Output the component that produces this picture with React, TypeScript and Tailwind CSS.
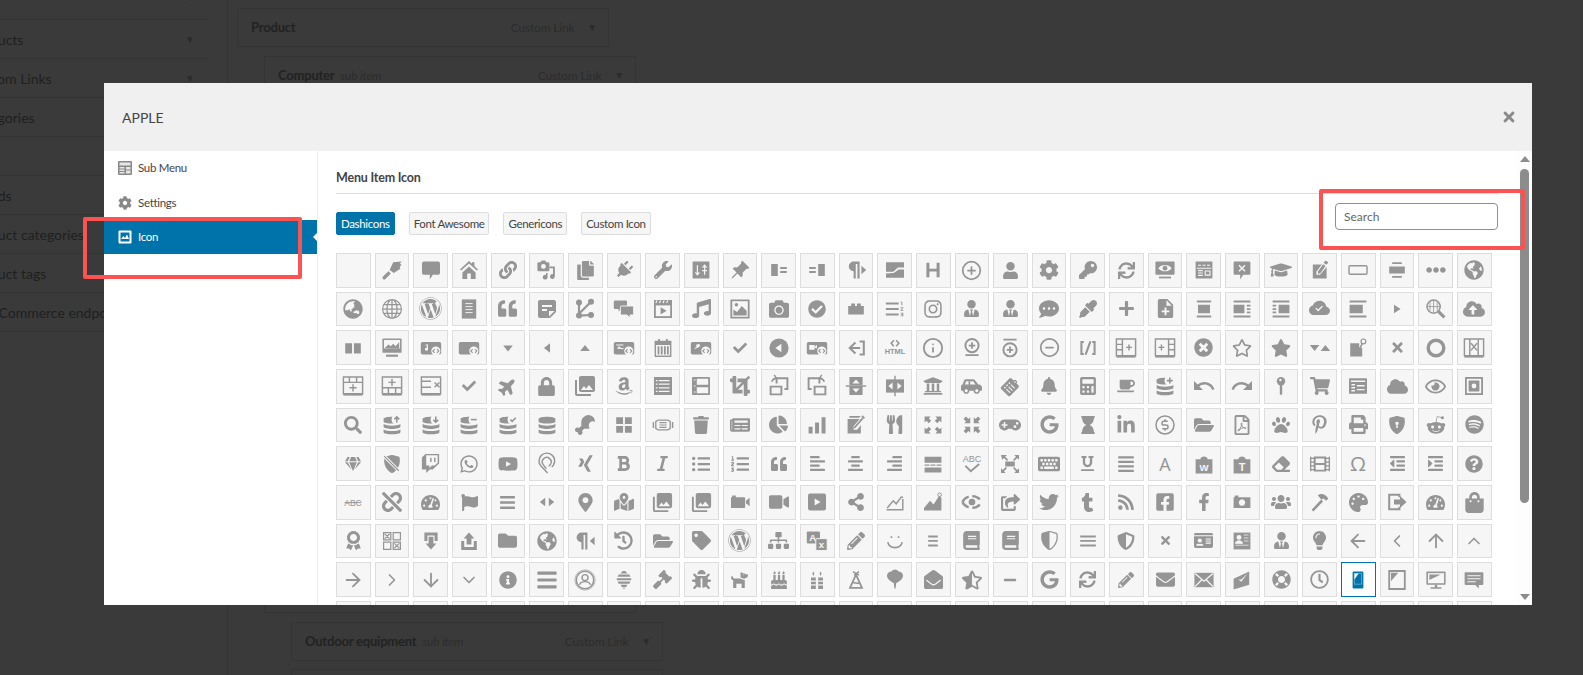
import type { ReactNode } from "react";
import {
  FaPlug, FaWrench, FaHeading, FaUser, FaCog, FaKey, FaSync, FaLink, FaCopy,
  FaGraduationCap, FaEllipsisH, FaGlobeAmericas, FaGlobeAsia, FaWordpress, FaQuoteLeft,
  FaMusic, FaCamera, FaCheckCircle, FaInstagram, FaUserTie, FaCommentDots, FaEyeDropper, FaPlus, FaCloudUploadAlt,
  FaTimesCircle, FaRegStar, FaStar, FaTimes, FaCheck, FaPlane, FaLock, FaAmazon, FaCrop, FaUniversity, FaCarSide,
  FaClipboardList, FaBell, FaCalculator, FaCoffee, FaShoppingCart, FaCloud, FaRegEye, FaSearch, FaDrumstickBite,
  FaTrash, FaNewspaper, FaChartPie, FaUtensils, FaGamepad, FaGoogle, FaHourglass, FaLinkedinIn, FaFolderOpen,
  FaRegFilePdf, FaPaw, FaPinterestP, FaPrint, FaRedditAlien, FaSpotify, FaGem, FaTwitch, FaWhatsapp, FaYoutube,
  FaXing, FaBold, FaItalic, FaListUl, FaListOl, FaAlignLeft, FaAlignCenter, FaAlignRight, FaAlignJustify,
  FaKeyboard, FaUnderline, FaEraser, FaFilm, FaOutdent, FaIndent, FaQuestionCircle, FaUnlink, FaTachometerAlt,
  FaFlag, FaBars, FaMapMarkedAlt, FaVideo, FaShareAlt, FaShareSquare, FaTwitter, FaTumblr, FaRss, FaFacebookSquare,
  FaFacebookF, FaUsers, FaPalette, FaShoppingBag, FaAward, FaFolder, FaHistory, FaTag, FaSitemap,
  FaPencilAlt, FaBook, FaShieldAlt, FaIdCard, FaLightbulb, FaInfoCircle, FaGavel, FaBug, FaDog, FaBirthdayCake,
  FaEnvelopeOpen, FaStarHalfAlt, FaMinus, FaEnvelope, FaLifeRing, FaRegClock,
  FaMapMarkerAlt,
} from "react-icons/fa";
import {
  FiPlusCircle, FiMinusCircle, FiInfo, FiArrowLeft, FiArrowRight, FiArrowUp, FiArrowDown, FiChevronLeft,
  FiChevronRight, FiChevronUp, FiChevronDown,
} from "react-icons/fi";
import { BsGlobe, BsPinAngleFill, BsCloudCheckFill, BsShieldLockFill, BsShieldSlashFill, BsShieldShaded } from "react-icons/bs";
import { MdStickyNote2, MdFormatListNumberedRtl, MdNoteAdd, MdPhotoLibrary, MdUndo, MdRedo } from "react-icons/md";
import { PiCurrencyCircleDollar } from "react-icons/pi";

const B = "#f6f6f6";
const SANS = "Liberation Sans, sans-serif";

// dashicons are a 20 unit grid drawn at 24px
function S({ children }: { children: ReactNode }) {
  return (
    <svg viewBox="0 0 20 20" width="24" height="24" fill="currentColor">
      {children}
    </svg>
  );
}
const F = ({ d }: { d: string }) => (
  <S>
    <path d={d} />
  </S>
);
const L = ({ d, w = 1.6 }: { d: string; w?: number }) => (
  <S>
    <path d={d} fill="none" stroke="currentColor" strokeWidth={w} />
  </S>
);
const Cut = ({ d, w = 1 }: { d: string; w?: number }) => <path d={d} fill="none" stroke={B} strokeWidth={w} />;

const Db = ({ sign }: { sign?: string }) => (
  <S>
    <path d="M3 5c0-2.600 14-2.600 14 0v2c0 2.400-14 2.400-14 0zM3 9.200c3 1.800 11 1.800 14 0v2.300c0 2.400-14 2.400-14 0zM3 13.700c3 1.800 11 1.800 14 0V16c0 2.400-14 2.400-14 0z" />
    {sign && <circle cx="14" cy="5.500" r="4.400" fill={B} />}
    {sign && <path d={sign} fill="none" stroke="currentColor" strokeWidth="1.300" />}
  </S>
);

const BlockCode = ({ children }: { children?: ReactNode }) => (
  <S>
    <rect x="1.500" y="5" width="17" height="10.500" rx="1.500" />
    {children}
    <circle cx="14" cy="12.500" r="3.800" fill={B} />
    <path d="M13 11l-1.500 1.500L13 14M15 11l1.500 1.500L15 14" fill="none" stroke="currentColor" strokeWidth=".9" />
  </S>
);

const Tbl = ({ d }: { d: string }) => (
  <S>
    <path d={"M2 2.500h16v14H2z" + d} fill="none" stroke="currentColor" strokeWidth="1.200" />
    <path d="M2 16h16v2H2z" />
  </S>
);

const Phone = (
  <S>
    <rect x="5.500" y="3" width="9" height="14" rx="1" />
    <path d="M7 4.500h3.500L7 9.500z" fill="#fff" />
    <path d="M7 4.500h6v9H7z" fill="none" stroke="#fff" strokeWidth=".3" />
  </S>
);

const row1 = [
  null,
  <F d="M2.500 15.500 7 11l2 2-4.500 4.500a1.400 1.400 0 0 1-2-2zM8 10l3-6.500 7-.5-1.500 2 1.500.5-1.500 2 .5 1.500-5.500 3.500z" />,
  <F d="M4 3h12a1.500 1.500 0 0 1 1.500 1.500v8a1.500 1.500 0 0 1-1.500 1.500h-4.500l-2.500 4v-4H4a1.500 1.500 0 0 1-1.500-1.500v-8A1.500 1.500 0 0 1 4 3z" />,
  <F d="M10 2.500 2.500 9.500l1 1L10 4.500l6.500 6 1-1-3-2.800V3.500h-2v1.300zM4.500 12 10 7l5.500 5v5.500h-4v-4.500h-3v4.500h-4z" />,
  <FaLink size={18} />,
  <S>
    <path d="M3 3.500h1.500l1-1.500h3l1 1.500H11a1 1 0 0 1 1 1V10a1 1 0 0 1-1 1H3a1 1 0 0 1-1-1V4.500a1 1 0 0 1 1-1z" />
    <circle cx="7" cy="7" r="2" fill={B} />
    <path d="M16.500 7v8.500a2 2 0 1 1-1.500-2V8.500h-3V7zM10.500 12.500v3.500a2 2 0 1 1-1.300-1.900v-1.600z" />
  </S>,
  <FaCopy size={19} />,
  <div className="rotate-45">
    <FaPlug size={18} />
  </div>,
  <FaWrench size={18} />,
  <S>
    <rect x="3" y="3" width="14" height="14" rx=".6" />
    <Cut d="M7 6v8M5.300 12 7 14l1.700-2M13 14V6M11.300 8 13 6l1.700 2M11 10.500h4" />
  </S>,
  <BsPinAngleFill size={20} />,
  <F d="M3.500 5h5.500v10H3.500zM11 7.500h5.500v1.700H11zM11 10.800h5.500v1.700H11z" />,
  <F d="M11 5h5.500v10H11zM3.500 7.500H9v1.700H3.500zM3.500 10.800H9v1.700H3.500z" />,
  <F d="M8 3a4 4 0 0 0 0 8v6h1.800V5h1.400v12H13V3zM14.500 6.500l4 3.500-4 3.500z" />,
  <F d="M2.500 3.500h15v4.500h-5l-4 3.500h-6zM17.500 9.500v7h-15V13l6.500-.5 4-3z" />,
  <F d="M4.500 4h2.500v5h6V4h2.500v12H13v-4.800H7V16H4.500z" />,
  <FiPlusCircle size={21} />,
  <FaUser size={17} />,
  <FaCog size={20} />,
  <FaKey size={18} />,
  <FaSync size={17} />,
  <S>
    <rect x="2" y="3" width="16" height="11" rx=".8" />
    <path d="M4.500 8.500C7 5 13 5 15.500 8.500 13 12 7 12 4.500 8.500z" fill={B} />
    <circle cx="10" cy="8.500" r="2" />
    <path d="M5 15.500h10V17H5z" />
  </S>,
  <S>
    <rect x="3" y="3" width="14" height="14" rx=".6" />
    <Cut d="M5 6h2.500M8.800 6h2.500M12.500 6H15M4 8.500h12M5 10.500h4M5 12.500h4M5 14.500h4M11 10.800h4v3.500h-4z" w={0.9} />
  </S>,
  <S>
    <path d="M4 3h12a1 1 0 0 1 1 1v9a1 1 0 0 1-1 1h-5l-2.500 4v-4H4a1 1 0 0 1-1-1V4a1 1 0 0 1 1-1z" />
    <Cut d="M7.500 6l5 5M12.500 6l-5 5" w={1.200} />
  </S>,
  <FaGraduationCap size={22} />,
  <F d="M4 5.500h7.500L7 11.500V14h3l5.500-6.500V17H4zM13 4l1.700-2 2.300 1.700-1.700 2zM8.300 11.300l4.300-6 2 1.400-4.300 6-2 .5z" />,
  <L d="M3.500 6.500h13a1 1 0 0 1 1 1v5a1 1 0 0 1-1 1h-13a1 1 0 0 1-1-1v-5a1 1 0 0 1 1-1z" w={1.200} />,
  <F d="M6 3.500h8V5H6zM3.500 7h13v6h-13zM6 15h8v1.500H6z" />,
  <FaEllipsisH size={20} />,
  <FaGlobeAmericas size={20} />,
];

const row2 = [
  <FaGlobeAsia size={20} />,
  <BsGlobe size={20} />,
  <FaWordpress size={23} />,
  <S>
    <rect x="4" y="2" width="12" height="16" />
    <Cut d="M7 5.500h6M7 8h6M7 10.500h6M7 13h6" w={0.8} />
  </S>,
  <FaQuoteLeft size={19} />,
  <MdStickyNote2 size={24} />,
  <S>
    <circle cx="5" cy="4.500" r="2.500" />
    <circle cx="15" cy="4" r="2.500" />
    <circle cx="5" cy="15.500" r="2.500" />
    <circle cx="15" cy="15" r="2.500" />
    <path d="M5 4.500v11M15 4 5 14M5 15.500 15 15" fill="none" stroke="currentColor" strokeWidth="1.800" />
  </S>,
  <S>
    <path d="M2.500 3h9a1 1 0 0 1 1 1v5a1 1 0 0 1-1 1H7.500l-2 2v-2h-3a1 1 0 0 1-1-1V4a1 1 0 0 1 1-1z" />
    <path d="M8 7.500h9a1 1 0 0 1 1 1v5.500a1 1 0 0 1-1 1h-2v2.500L12.500 15H8a1 1 0 0 1-1-1V8.500a1 1 0 0 1 1-1z" stroke={B} strokeWidth=".8" />
  </S>,
  <S>
    <rect x="2.500" y="2.500" width="15" height="15" />
    <path d="M4 7h12v9H4z" fill={B} />
    <path d="M8 8.500v6l5-3z" />
    <Cut d="M4 5l1-2M7 5l1-2M10 5l1-2M13 5l1-2" />
  </S>,
  <FaMusic size={19} />,
  <S>
    <rect x="2" y="2" width="16" height="16" rx=".5" />
    <path d="M3.500 3.500h13v13h-13z" fill={B} />
    <path d="M4.500 15.500v-5l3 2 4-5 4 4v4z" />
    <circle cx="7" cy="6.500" r="1.500" />
  </S>,
  <FaCamera size={20} />,
  <FaCheckCircle size={18} />,
  <F d="M3.500 7.500h2.500V5.500h3.200v2h1.600v-2h3.200v2h2.500v7h-13z" />,
  <MdFormatListNumberedRtl size={22} />,
  <FaInstagram size={20} />,
  <FaUserTie size={17} />,
  <FaUserTie size={17} />,
  <FaCommentDots size={20} />,
  <FaEyeDropper size={18} />,
  <FaPlus size={17} />,
  <MdNoteAdd size={23} />,
  <F d="M4 3h12v1.500H4zM5 6.500h10v7H5zM4 15.500h12V17H4z" />,
  <F d="M3 3h14v1.500H3zM3 6.500h9v7H3zM14 6.500h3V8h-3zM14 9.300h3v1.500h-3zM14 12h3v1.500h-3zM3 15.500h14V17H3z" />,
  <F d="M3 3h14v1.500H3zM8 6.500h9v7H8zM3 6.500h3V8H3zM3 9.300h3v1.500H3zM3 12h3v1.500H3zM3 15.500h14V17H3z" />,
  <BsCloudCheckFill size={21} />,
  <F d="M3 3h14v1.500H3zM3 6.500h11v7H3zM3 15.500h14V17H3z" />,
  <F d="M7.500 6.500l5.500 3.500-5.500 3.500z" />,
  <S>
    <circle cx="8" cy="8" r="5.500" fill="none" stroke="currentColor" strokeWidth="1.300" />
    <path d="M12 12l5 5" stroke="currentColor" strokeWidth="2.500" />
    <path d="M3 8h10M8 3v10M5 4.500v7M11 4.500v7" fill="none" stroke="currentColor" strokeWidth=".7" />
  </S>,
  <FaCloudUploadAlt size={22} />,
];

const row3 = [
  <F d="M3.500 6h5.700v8.500H3.500zM10.800 6h5.700v8.500h-5.700z" />,
  <S>
    <rect x="2" y="2" width="16" height="12" rx=".6" />
    <path d="M3.300 3.300h13.400v7H3.300z" fill={B} />
    <path d="M4 10l3-3 2 1.500 2-2 2 2 3-3.500v5.500z" />
    <path d="M5 15.500h10V17.300H5z" />
  </S>,
  <BlockCode>
    <path d="M7.500 7v4a1.300 1.300 0 1 1-1-1.200V8h-1V7z" fill={B} />
  </BlockCode>,
  <BlockCode />,
  <F d="M6 8h8l-4 5z" />,
  <F d="M12.500 6v8l-5-4z" />,
  <F d="M6 12.500h8l-4-5z" />,
  <BlockCode>
    <path d="M3.500 7h6v1H3.500zM4 10.500l2-2 1.500 1.500h2v1z" fill={B} />
  </BlockCode>,
  <S>
    <path d="M3 4h3V2.500h1.500V4h5V2.500H14V4h3v13.500H3z" />
    <path d="M4.200 7.500h11.600v8.800H4.200z" fill={B} />
    <path d="M5.500 8.500h1.500v7H5.500zM8.200 8.500h1.500v7H8.200zM10.800 8.500h1.500v7h-1.500zM13.300 8.500h1.500v7h-1.500z" />
  </S>,
  <BlockCode>
    <path d="M4 11l2.500-2.500L5.500 7.500l3-1 1 2-1 .2-1 1-1 .3z" fill={B} />
  </BlockCode>,
  <FaCheck size={14} />,
  <S>
    <circle cx="10" cy="10" r="8" />
    <path d="M12 6.500v7L7 10z" fill={B} />
  </S>,
  <BlockCode>
    <path d="M3.500 7.500h4.500v4H3.500zM8 9l2-1.500v3L8 9.500z" fill={B} />
  </BlockCode>,
  <L d="M9.500 5.500 4.800 10l4.700 4.500M5 10h8.500M13 4.500h3.500v11H13" w={1.700} />,
  <S>
    <path d="M9 3.500 6.800 6 9 8.500M11 3.500 13.200 6 11 8.500" fill="none" stroke="currentColor" strokeWidth="1.300" />
    <text x="10" y="15" fontSize="6.200" fontWeight="700" textAnchor="middle" fontFamily={SANS}>
      HTML
    </text>
  </S>,
  <FiInfo size={22} />,
  <S>
    <circle cx="10" cy="8" r="5.500" fill="none" stroke="currentColor" strokeWidth="1.600" />
    <path d="M10 5.300v5.400M7.300 8h5.400M4.500 16h11" fill="none" stroke="currentColor" strokeWidth="1.500" />
  </S>,
  <S>
    <circle cx="10" cy="11.500" r="5.500" fill="none" stroke="currentColor" strokeWidth="1.600" />
    <path d="M10 8.800v5.400M7.300 11.500h5.400M4.500 3h11" fill="none" stroke="currentColor" strokeWidth="1.500" />
  </S>,
  <FiMinusCircle size={21} />,
  <L d="M6.500 5H4.500v10h2M13.500 5h2v10h-2M12 4.500 8 15.500" w={1.700} />,
  <Tbl d="M7 2.500v14M2 7h5M2 11.500h5M12.500 7v5M10 9.500h5" />,
  <Tbl d="M13 2.500v14M13 7h5M13 11.500h5M7 7v5M4.500 9.500h5" />,
  <FaTimesCircle size={19} />,
  <FaRegStar size={20} />,
  <FaStar size={20} />,
  <F d="M1.500 7.500h8l-4 5zM18.500 12.500h-8l4-5z" />,
  <S>
    <path d="M3.500 6h7.500v3.300l2.500 1V17h-10z" />
    <circle cx="14.500" cy="4.500" r="2" fill="none" stroke="currentColor" strokeWidth="1" />
    <path d="M13.500 6l-2 5" stroke="currentColor" strokeWidth="1.300" />
  </S>,
  <FaTimes size={15} />,
  <S>
    <circle cx="10" cy="10" r="6.500" fill="none" stroke="currentColor" strokeWidth="2.800" />
  </S>,
  <Tbl d="M6.500 2.500v14M13.500 2.500v14M7.500 6l5 6M12.500 6l-5 6" />,
];

const row4 = [
  <Tbl d="M2 7h16M7 2.500v4.500M13 2.500v4.500M10 8.500v6M7 11.500h6" />,
  <Tbl d="M2 11.500h16M7 11.500v5M13 11.500v5M10 4v6M7 7h6" />,
  <Tbl d="M2 6h8M2 11h8M13 7l4 4M17 7l-4 4" />,
  <FaCheck size={14} />,
  <div className="-rotate-45">
    <FaPlane size={19} />
  </div>,
  <FaLock size={19} />,
  <MdPhotoLibrary size={24} />,
  <FaAmazon size={20} />,
  <S>
    <rect x="2.500" y="2.500" width="15" height="15" />
    <Cut d="M6.500 5.500h9M4 5.500h1.500M6.500 8.500h9M4 8.500h1.500M6.500 11.500h9M4 11.500h1.500M6.500 14.500h9M4 14.500h1.500" w={1} />
  </S>,
  <S>
    <rect x="2.500" y="2.500" width="15" height="15" rx=".6" />
    <path d="M6.500 4h9.500v5H6.500zM6.500 11h9.500v5H6.500z" fill={B} />
    <path d="M4 4.500h1.500v1H4zM4 9.500h1.500v1H4zM4 14.500h1.500v1H4z" fill={B} />
  </S>,
  <FaCrop size={20} />,
  <S>
    <path d="M3 10.500h9v6.500H3zM8 8V3.500h9v9h-2.500" fill="none" stroke="currentColor" strokeWidth="1.600" />
    <path d="M4 6.500a4 4 0 0 1 3-3M6 .8l1.800 2.700L4.600 5" fill="none" stroke="currentColor" strokeWidth="1.200" />
  </S>,
  <S>
    <path d="M8 10.500h9v6.500H8zM12 8V3.500H3v9h2.500" fill="none" stroke="currentColor" strokeWidth="1.600" />
    <path d="M16 6.500a4 4 0 0 0-3-3M14 .8l-1.800 2.700L15.400 5" fill="none" stroke="currentColor" strokeWidth="1.200" />
  </S>,
  <S>
    <path d="M4.500 2.500h11v15h-11z" />
    <path d="M7 8l3-3.500L13 8zM7 12l3 3.500 3-3.500z" fill={B} />
    <path d="M1.500 10h17" stroke="currentColor" strokeWidth="1.200" />
    <path d="M4 9.500h12v.2H4z" fill={B} />
  </S>,
  <S>
    <path d="M2.500 4.500h15v11h-15z" />
    <path d="M8 7l-3.500 3L8 13zM12 7l3.500 3-3.500 3z" fill={B} />
    <path d="M10 1.500v17" stroke="currentColor" strokeWidth="1.200" />
  </S>,
  <FaUniversity size={20} />,
  <FaCarSide size={21} />,
  <div className="rotate-45">
    <FaClipboardList size={17} />
  </div>,
  <FaBell size={18} />,
  <FaCalculator size={18} />,
  <FaCoffee size={18} />,
  <Db sign="M14 3v5M11.500 5.500h5" />,
  <MdUndo size={24} />,
  <MdRedo size={24} />,
  <S>
    <circle cx="10" cy="6" r="3.500" />
    <path d="M9 8h2v8.500l-1 1.500-1-1.500z" />
    <circle cx="9.500" cy="5" r="1" fill={B} />
  </S>,
  <FaShoppingCart size={20} />,
  <S>
    <rect x="2.500" y="3.500" width="15" height="13" rx=".4" />
    <Cut d="M4 6h12M4.500 9h3M4.500 11.500h3M4.500 14h3M9 9.800h6.500M9 13h6.500" w={1.200} />
  </S>,
  <FaCloud size={21} />,
  <FaRegEye size={21} />,
  <S>
    <rect x="2.500" y="2.500" width="15" height="15" rx=".5" />
    <path d="M4 4h12v12H4z" fill={B} />
    <rect x="5.500" y="5.500" width="9" height="9" rx=".5" />
    <circle cx="10" cy="10" r="2" fill={B} />
  </S>,
];

const row5 = [
  <FaSearch size={18} />,
  <Db sign="M14 8V3.300M12 5.300l2-2 2 2" />,
  <Db sign="M14 3v4.700M12 5.700l2 2 2-2" />,
  <Db sign="M11.500 5.500h5" />,
  <Db sign="M12 5.500l1.500 1.500 3-3" />,
  <Db />,
  <FaDrumstickBite size={20} />,
  <F d="M3.500 3.500h5.700v5.700H3.500zM10.800 3.500h5.700v5.700h-5.700zM3.500 10.800h5.700v5.700H3.500zM10.800 10.800h5.700v5.700h-5.700z" />,
  <S>
    <path d="M2 7.500v5M18 7.500v5" stroke="currentColor" strokeWidth="1.200" />
    <path d="M4 7l2-1h8l2 1v6l-2 1H6l-2-1z" fill="none" stroke="currentColor" strokeWidth="1.100" />
    <path d="M7 8h6M7 10h6M7 12h6" stroke="currentColor" strokeWidth=".9" />
  </S>,
  <FaTrash size={18} />,
  <FaNewspaper size={20} />,
  <FaChartPie size={19} />,
  <F d="M3 11.500h3.300V17H3zM8.400 8h3.300v9H8.400zM13.800 3.500h3.300V17h-3.300z" />,
  <S>
    <path d="M3 5h10l-5 6v3h3l3-4v7H3z" />
    <path d="M4.500 4V2.500h9.500l-1.500 1.500z" />
    <path d="M8.500 12.500l7-8M15 2.500l2 2" fill="none" stroke="currentColor" strokeWidth="1.500" />
  </S>,
  <FaUtensils size={19} />,
  <F d="M3 3h5L6.500 4.500 8.500 6.500 6.500 8.500 4.500 6.500 3 8zM17 3v5l-1.500-1.500-2 2-2-2 2-2L12 3zM3 17v-5l1.500 1.500 2-2 2 2-2 2L8 17zM17 17h-5l1.500-1.500-2-2 2-2 2 2L17 12z" />,
  <F d="M8.500 8.500h-5L5 7 3 5l2-2 2 2 1.500-1.500zM11.500 8.500V3.500L13 5l2-2 2 2-2 2 1.500 1.500zM8.500 11.500v5L7 15l-2 2-2-2 2-2-1.500-1.500zM11.500 11.500h5L15 13l2 2-2 2-2-2-1.500 1.500z" />,
  <FaGamepad size={22} />,
  <FaGoogle size={19} />,
  <FaHourglass size={18} />,
  <FaLinkedinIn size={20} />,
  <PiCurrencyCircleDollar size={24} />,
  <FaFolderOpen size={20} />,
  <FaRegFilePdf size={20} />,
  <FaPaw size={18} />,
  <FaPinterestP size={19} />,
  <FaPrint size={19} />,
  <BsShieldLockFill size={18} />,
  <FaRedditAlien size={20} />,
  <FaSpotify size={19} />,
];

const row6 = [
  <FaGem size={16} />,
  <BsShieldSlashFill size={18} />,
  <FaTwitch size={19} />,
  <FaWhatsapp size={20} />,
  <FaYoutube size={20} />,
  <L d="M10.500 17.500 4.800 11.500a6.500 6.500 0 1 1 10.500-.5L14 12.500M9.500 14l-2.700-3.500a3.700 3.700 0 1 1 6.200-.4L11.500 12" w={1.200} />,
  <FaXing size={19} />,
  <FaBold size={17} />,
  <FaItalic size={17} />,
  <FaListUl size={18} />,
  <FaListOl size={18} />,
  <FaQuoteLeft size={16} />,
  <FaAlignLeft size={17} />,
  <FaAlignCenter size={17} />,
  <FaAlignRight size={17} />,
  <F d="M3 4h14v5H3zM3 10.500h4v1h-4zM8 10.500h4v1H8zM13 10.500h4v1h-4zM3 13h14v4H3z" />,
  <S>
    <text x="10" y="8.500" fontSize="7.500" textAnchor="middle" fontFamily={SANS}>
      ABC
    </text>
    <path d="M4.500 11.500 9 16l7-6" fill="none" stroke="currentColor" strokeWidth="1.500" />
  </S>,
  <S>
    <path d="M6 8h8v4H6zM2.500 2.500h5L6 4l2.500 2.500-1 1L5 5 3.500 6.500zM17.500 2.500v4L16 5l-2.500 2.500-1-1L15 4l-1.500-1.500zM2.500 17.500v-4L4 15l2.500-2.500 1 1L5 16l1.500 1.500zM17.500 17.500h-4L15 16l-2.500-2.500 1-1L16 15l1.500-1.500z" />
  </S>,
  <FaKeyboard size={22} />,
  <FaUnderline size={15} />,
  <FaAlignJustify size={18} />,
  <S>
    <text x="10" y="15.500" fontSize="15" textAnchor="middle" fontFamily="Open Sans, sans-serif">
      A
    </text>
  </S>,
  <S>
    <path d="M3 6h4c0-3 6-3 6 0h4v12H3z" />
    <text x="10" y="16" fontSize="8" fontWeight="700" textAnchor="middle" fill={B} fontFamily={SANS}>
      W
    </text>
  </S>,
  <S>
    <path d="M3 6h4c0-3 6-3 6 0h4v12H3z" />
    <text x="10" y="16" fontSize="9" fontWeight="700" textAnchor="middle" fill={B} fontFamily={SANS}>
      T
    </text>
  </S>,
  <FaEraser size={18} />,
  <FaFilm size={20} />,
  <S>
    <text x="10" y="16" fontSize="17" textAnchor="middle" fontFamily="Open Sans, sans-serif">
      Ω
    </text>
  </S>,
  <FaOutdent size={17} />,
  <FaIndent size={17} />,
  <FaQuestionCircle size={18} />,
];

const row7 = [
  <S>
    <text x="10" y="13" fontSize="7" textAnchor="middle" fontFamily={SANS}>
      ABC
    </text>
    <path d="M3 10.500h14" stroke="currentColor" strokeWidth=".8" />
  </S>,
  <FaUnlink size={20} />,
  <FaTachometerAlt size={19} />,
  <FaFlag size={17} />,
  <FaBars size={17} />,
  <F d="M8.500 6.500v7L4 10zM11.500 6.500v7L16 10z" />,
  <FaMapMarkerAlt size={19} />,
  <FaMapMarkedAlt size={20} />,
  <MdPhotoLibrary size={23} />,
  <MdPhotoLibrary size={23} />,
  <F d="M2.500 6h1v-1.500h3V6h7a.8.8 0 0 1 .8.800v7.400a.8.8 0 0 1-.8.800H2.500zM15 9l3-2.500v7L15 11z" />,
  <FaVideo size={20} />,
  <S>
    <rect x="2.500" y="3" width="15" height="14" rx="1.500" />
    <path d="M8 7v6l5-3z" fill={B} />
  </S>,
  <FaShareAlt size={18} />,
  <L d="M3 16.500h13.500V7.500M3.500 15l5-6 2.500 2.500 4.500-6M15.500 5.500l1 1" w={1.200} />,
  <S>
    <path d="M2.500 17v-2l5-6 3 3 4.500-7 2 1.500V17z" />
    <circle cx="15.500" cy="4" r="1.500" fill="none" stroke="currentColor" strokeWidth=".8" />
  </S>,
  <S>
    <path d="M2 10C5 3.500 15 3.500 18 10M2 10c3 6.500 13 6.500 16 0" fill="none" stroke="currentColor" strokeWidth="2" strokeDasharray="7 3" />
    <circle cx="10" cy="10" r="2.800" />
  </S>,
  <FaShareSquare size={19} />,
  <FaTwitter size={20} />,
  <FaTumblr size={19} />,
  <FaRss size={18} />,
  <FaFacebookSquare size={20} />,
  <FaFacebookF size={18} />,
  <F d="M3 6h1V4.500h3V6h10v9H3zM10 7.800a2.700 2.700 0 1 0 .01 0z" />,
  <FaUsers size={20} />,
  <F d="M3 16.500 11 8l1.500 1.500L4.500 18zM8 4.500c3-2 6-1.500 9 2.500l-2 2-2-2-2 1-2-2.500z" />,
  <FaPalette size={19} />,
  <S>
    <path d="M12 6V4H3.500v12H12v-2" fill="none" stroke="currentColor" strokeWidth="1.700" />
    <path d="M7.500 8h5V5l5.500 5-5.500 5v-3h-5z" />
  </S>,
  <FaTachometerAlt size={19} />,
  <FaShoppingBag size={21} />,
];

const row8 = [
  <FaAward size={19} />,
  <L d="M3 3h6v6H3zM11 3h6v6h-6zM3 11h6v6H3zM11 11h6v6h-6zM4 4l4 4M8 4l-4 4M12 12l4 4M16 12l-4 4" w={1} />,
  <F d="M4.500 3h11v7H13V5.500H7V10H4.500zM8 6.500h4V12h2.500L10 17l-4.500-5H8z" />,
  <F d="M10 3l4.500 5H12v5H8V8H5.500zM3.500 10H6v5h8v-5h2.500v7.500h-13z" />,
  <FaFolder size={19} />,
  <FaGlobeAmericas size={20} />,
  <F d="M7 3a4 4 0 0 0 0 8v6h1.800V5h1.400v12H12V3zM18 6.500l-4 3.500 4 3.500z" />,
  <FaHistory size={19} />,
  <FaFolderOpen size={20} />,
  <FaTag size={19} />,
  <FaWordpress size={23} />,
  <FaSitemap size={21} />,
  <S>
    <rect x="1.500" y="2" width="11" height="10" rx="1" />
    <text x="6.500" y="9.800" fontSize="8" fontWeight="700" textAnchor="middle" fill={B} fontFamily={SANS}>
      A
    </text>
    <rect x="9" y="8" width="9.500" height="10" rx="1" stroke={B} strokeWidth=".8" />
    <text x="13.700" y="16" fontSize="8" fontWeight="700" textAnchor="middle" fill={B} fontFamily={SANS}>
      x
    </text>
  </S>,
  <FaPencilAlt size={18} />,
  <L d="M4 11c1.200 6 10.800 6 12 0M7 6v1.500M13 6v1.500" w={1.300} />,
  <F d="M6 5.500h8V7H6zM6 9.200h8v1.500H6zM6 13h8v1.500H6z" />,
  <FaBook size={19} />,
  <FaBook size={19} />,
  <BsShieldShaded size={19} />,
  <F d="M3.500 5.500h13V7h-13zM3.500 9.200h13v1.500h-13zM3.500 13h13v1.500h-13z" />,
  <FaShieldAlt size={18} />,
  <FaTimes size={13} />,
  <FaIdCard size={19} />,
  <S>
    <rect x="3" y="3" width="14" height="14" />
    <circle cx="7.500" cy="7" r="2" fill={B} />
    <path d="M4.500 12c0-3 6-3 6 0zM11.500 5h4M11.500 7.500h4M11.500 10h4M4.500 13.500h11" fill={B} stroke={B} strokeWidth=".6" />
  </S>,
  <FaUserTie size={17} />,
  <FaLightbulb size={19} />,
  <FiArrowLeft size={22} />,
  <FiChevronLeft size={20} />,
  <FiArrowUp size={22} />,
  <FiChevronUp size={20} />,
];

const row9 = [
  <FiArrowRight size={22} />,
  <FiChevronRight size={20} />,
  <FiArrowDown size={22} />,
  <FiChevronDown size={20} />,
  <FaInfoCircle size={18} />,
  <FaBars size={22} />,
  <S>
    <circle cx="10" cy="10" r="8.500" fill="none" stroke="currentColor" strokeWidth=".5" />
    <circle cx="10" cy="10" r="7.300" fill="none" stroke="currentColor" strokeWidth="1.300" />
    <circle cx="10" cy="8" r="2.500" fill="none" stroke="currentColor" strokeWidth="1.200" />
    <path d="M5.500 14c1-3.500 8-3.500 9 0" fill="none" stroke="currentColor" strokeWidth="1.200" />
  </S>,
  <F d="M9 2.500h2l2 2H7zM5.500 5.500h9l.8 1.800H4.700zM4 8.500h12v1.800H4zM4.700 11.300h10.600l-.8 1.800h-9zM7 14h6l-1.500 2h-3zM9 16.800h2l-1 1.200z" />,
  <FaGavel size={19} />,
  <FaBug size={19} />,
  <FaDog size={19} />,
  <FaBirthdayCake size={18} />,
  <S>
    <path d="M5 8h4v9.500H5zM11 8h4v9.500h-4zM7 3c1 1.500 1 2.500 0 3.500-1-1-1-2 0-3.500zM13 3c1 1.500 1 2.500 0 3.500-1-1-1-2 0-3.500z" />
    <Cut d="M5 11h4M5 14h4M11 11h4M11 14h4" />
  </S>,
  <S>
    <path d="M10 5.500l5 11H5z" fill="none" stroke="currentColor" strokeWidth="1.500" />
    <path d="M7.500 3l5 3M12.500 3l-4 3M7 12l6 1" stroke="currentColor" strokeWidth="1.300" />
  </S>,
  <F d="M7 3a3.500 3.500 0 0 1 6 0 3.500 3.500 0 0 1 3 5.500c-1 2-4 3.500-5 4L10.500 17h-1L9 12.500c-1-.5-4-2-5-4A3.500 3.500 0 0 1 7 3z" />,
  <FaEnvelopeOpen size={19} />,
  <FaStarHalfAlt size={20} />,
  <FaMinus size={14} />,
  <FaGoogle size={19} />,
  <FaSync size={17} />,
  <FaPencilAlt size={16} />,
  <FaEnvelope size={19} />,
  <S>
    <rect x="2" y="4" width="16" height="12" />
    <Cut d="M2.500 4.500 10 11l7.500-6.500M2.500 15.500 8 10M17.500 15.500 12 10" w={1.100} />
  </S>,
  <F d="M3 9l13-6v11L3 18zM7 9.500l2.500 2 5-7-5 5z" />,
  <FaLifeRing size={19} />,
  <FaRegClock size={19} />,
  Phone,
  <S>
    <path d="M3.500 2.500h13v15h-13z" fill="none" stroke="currentColor" strokeWidth="1.500" />
    <path d="M5 4h6l-6 7z" />
  </S>,
  <S>
    <rect x="2" y="3" width="16" height="11" rx=".6" />
    <path d="M3.300 4.300h13.400v8.400H3.300z" fill={B} />
    <path d="M4.500 5.500h9.500L4.500 10z" />
    <path d="M9 14h2v2H9zM5.500 16h9v1.300h-9z" />
  </S>,
  <S>
    <path d="M3 3.500h14a.8.8 0 0 1 .8.800v9a.8.8 0 0 1-.8.800h-3v3l-3-3H3a.8.8 0 0 1-.8-.800v-9a.8.8 0 0 1 .8-.800z" />
    <Cut d="M4.500 6.500h11M4.500 9h11M4.500 11.500h7" w={0.9} />
  </S>,
];

const ICONS = [row1, row2, row3, row4, row5, row6, row7, row8, row9, Array(30).fill(null)].flat();

const TABS = ["Dashicons", "Font Awesome", "Genericons", "Custom Icon"];

function LeftPanel() {
  const rows = ["", "Products", "Custom Links", "Categories", "", "Brands", "Product categories", "Product tags", "WooCommerce endpoints"];
  return (
    <div className="ml-[-31px] w-[240px] shrink-0">
      {rows.map((r, i) => (
        <div
          key={i}
          className={`flex items-center justify-between border-b border-[#343434] pr-[14px] text-[14px] text-[#1f1f1f] ${i === 0 ? "h-[20px] items-end pb-[14px]" : "h-[39px]"}`}
        >
          <span className="whitespace-nowrap">{r}</span>
          {i < 4 && <span className="text-[10px] text-[#2b2b2b]">▼</span>}
        </div>
      ))}
    </div>
  );
}

function MenuBox({ title, sub, indent, className = "" }: { title: string; sub?: boolean; indent: string; className?: string }) {
  return (
    <div className={`flex h-[39px] w-[372px] shrink-0 items-center border border-[#343434] pl-[13px] pr-[11px] tracking-[-0.2px] ${indent} ${className}`}>
      <span className="text-[13px] font-bold text-[#222]">{title}</span>
      {sub && <span className="ml-[6px] text-[12px] italic text-[#2c2c2c]">sub item</span>}
      <span className="ml-auto text-[12px] text-[#2c2c2c]">Custom Link</span>
      <span className="ml-[13px] text-[10px] text-[#2b2b2b]">▼</span>
    </div>
  );
}

function Background() {
  return (
    <div className="flex h-[675px] w-[1583px] overflow-hidden">
      <LeftPanel />
      <div className="ml-[18px] flex h-full flex-1 flex-col border-l border-[#343434] pl-[9px] pt-[8px]">
        <MenuBox title="Product" indent="" />
        <MenuBox title="Computer" sub indent="ml-[27px]" className="mt-[9px]" />
        <div className="h-[479px] shrink-0" />
        <MenuBox title="" indent="ml-[27px]" />
        <MenuBox title="Outdoor equipment" sub indent="ml-[54px]" className="mt-[9px]" />
        <MenuBox title="" indent="ml-[54px]" className="mt-[8px]" />
      </div>
    </div>
  );
}

function Sidebar() {
  const itemCls = "flex h-[34px] items-center pl-[14px] text-[11.500px] tracking-[-0.3px]";
  return (
    <div className="w-[213px] shrink-0 bg-white">
      <div className={`${itemCls} text-[#444]`}>
        <svg viewBox="0 0 14 14" width="14" height="14" className="text-[#888]" fill="currentColor">
          <rect width="14" height="14" rx="1" />
          <path d="M1.500 1.500h11v3h-11zM1.500 6h5v1.500h-5zM1.500 8.500h5v1.500h-5zM1.500 11h5v1.500h-5zM8 6h4.500v2.500H8zM8 9.500h4.500v3H8z" fill="#e6e6e6" />
        </svg>
        <span className="ml-[6px]">Sub Menu</span>
      </div>
      <div className={`${itemCls} mt-[1px] text-[#444]`}>
        <FaCog size={14} className="text-[#888]" />
        <span className="ml-[6px]">Settings</span>
      </div>
      <div className={`${itemCls} relative bg-[#0073aa] text-white`}>
        <svg viewBox="0 0 14 14" width="14" height="14" fill="none">
          <rect x=".5" y=".5" width="13" height="13" rx="1" fill="#fff" />
          <path d="M2.500 2.500h9v9h-9z" fill="#0073aa" />
          <path d="M3 9l2.500-3 1.500 2 2-3.500 2 4.500z" fill="#fff" />
        </svg>
        <span className="ml-[6px]">Icon</span>
        <div className="absolute right-0 top-[13px] h-0 w-0 border-y-[4px] border-r-[4px] border-y-transparent border-r-white" />
      </div>
    </div>
  );
}

function Scrollbar() {
  return (
    <div className="flex w-[15px] shrink-0 flex-col items-center bg-[#fdfdfd] pt-[5px]">
      <div className="h-0 w-0 border-x-[5px] border-b-[6px] border-x-transparent border-b-[#8c8c8c]" />
      <div className="mt-[7px] h-[334px] w-[9px] rounded-[5px] bg-[#8c8c8c]" />
      <div className="mt-[91px] h-0 w-0 border-x-[5px] border-t-[6px] border-x-transparent border-t-[#8c8c8c]" />
    </div>
  );
}

export default function App() {
  return (
    <div className="relative h-[675px] w-[1583px] overflow-hidden bg-[#3a3a3a] font-['Lato',sans-serif]">
      <Background />

      <div className="absolute left-[104px] top-[83px] flex h-[522px] w-[1428px] flex-col bg-white">
        <div className="flex h-[68px] shrink-0 items-center justify-between bg-[#f0f0f0] pl-[18px] pr-[15px]">
          <span className="text-[14px] text-[#444]">APPLE</span>
          <FaTimes size={16} className="text-[#8a8a8a]" />
        </div>
        <div className="flex min-h-0 flex-1">
          <Sidebar />
          <div className="min-w-0 flex-1 overflow-hidden border-l border-[#eee] pl-[18px] pr-[18px]">
            <div className="flex h-[43px] items-center border-b border-[#ddd] pt-[12px] text-[12.500px] font-bold tracking-[-0.2px] text-[#444]">
              Menu Item Icon
            </div>
            <div className="mt-[9px] flex h-[32px] items-start">
              {TABS.map((t, i) => (
                <div
                  key={t}
                  className={`mr-[14px] mt-[9px] flex h-[23px] items-center rounded-[2px] border px-[4px] text-[11.500px] tracking-[-0.35px] ${i === 0 ? "border-[#0073aa] bg-[#0073aa] text-white" : "border-[#ddd] bg-[#f6f6f6] text-[#444]"}`}
                >
                  {t}
                </div>
              ))}
              <input
                placeholder="Search"
                className="ml-auto mr-[1px] h-[27px] w-[163px] rounded-[4px] border border-[#8c8f94] bg-white px-[8px] text-[12px] placeholder:text-[#666]"
              />
            </div>
            <div className="mt-[18px] grid auto-rows-[34.670px] grid-cols-[repeat(30,34.670px)] gap-[4px]">
              {ICONS.map((ic, i) => (
                <div
                  key={i}
                  className={
                    i === 266
                      ? "flex items-center justify-center border border-[#0073aa] bg-white text-[#0073aa]"
                      : "flex items-center justify-center border border-[#ddd] bg-[#f6f6f6] text-[#959595]"
                  }
                >
                  {ic}
                </div>
              ))}
            </div>
          </div>
          <Scrollbar />
        </div>
      </div>

      <div className="absolute left-[83px] top-[217px] h-[62px] w-[219px] rounded-[2px] border-[4px] border-[#fb5252]" />
      <div className="absolute left-[1319px] top-[189px] h-[61px] w-[206px] rounded-[2px] border-[4px] border-[#fb5252]" />
    </div>
  );
}
